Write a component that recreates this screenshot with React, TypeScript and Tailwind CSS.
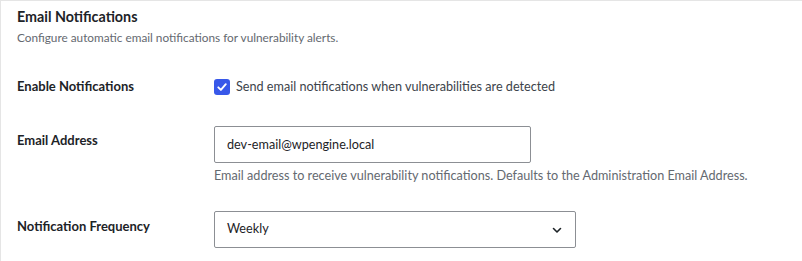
import React, { useState } from "react";

const font = { fontFamily: "Lato, 'Open Sans', sans-serif" };

function ChevronDown() {
    return (
        <svg width="12" height="12" viewBox="0 0 12 12" fill="none">
            <path d="M2.5 4.5 6 8l3.5-3.5" stroke="#1d2327" strokeWidth="1.6" strokeLinecap="round" strokeLinejoin="round" />
        </svg>
    );
}

export default function App() {
    const [enabled, setEnabled] = useState(true);
    const [email, setEmail] = useState("dev-email@wpengine.local");

    return (
        <div className="w-[802px] h-[261px] bg-white border-t border-l border-[#e5e5e5] overflow-hidden" style={font}>
            <div className="pl-[16px] pt-[5px]">
                <h2 className="text-[14.3px] font-bold text-[#1d2327] leading-[22px]">Email Notifications</h2>
                <p className="text-[11.8px] text-[#646970] leading-[18px] mt-[1px]">
                    Configure automatic email notifications for vulnerability alerts.
                </p>
            </div>

            <div className="pl-[16px] mt-[30px] flex items-center h-[20px]">
                <div className="w-[197px] text-[13px] font-bold text-[#1d2327]">Enable Notifications</div>
                <label className="flex items-center gap-[6px] text-[12.65px] text-[#3c434a] cursor-pointer">
                    <span
                        onClick={() => setEnabled(!enabled)}
                        className={`w-[16px] h-[16px] rounded-[3px] flex items-center justify-center ${enabled ? "bg-[#3858e9]" : "border border-[#8c8f94] bg-white"}`}
                    >
                        {enabled && (
                            <svg width="12" height="12" viewBox="0 0 12 12" fill="none">
                                <path d="M2.3 6.3 4.9 8.9 9.8 3.2" stroke="white" strokeWidth="1.9" strokeLinecap="round" strokeLinejoin="round" />
                            </svg>
                        )}
                    </span>
                    Send email notifications when vulnerabilities are detected
                </label>
            </div>

            <div className="pl-[16px] mt-[29px] flex items-start">
                <div className="w-[197px] text-[13px] font-bold text-[#1d2327] pt-[5px]">Email Address</div>
                <div>
                    <input
                        value={email}
                        onChange={e => setEmail(e.target.value)}
                        className="w-[317px] h-[37px] px-[12px] border border-[#8c8f94] rounded-[2px] text-[12.65px] text-[#1d2327] outline-none"
                        style={font}
                    />
                    <p className="mt-[3px] text-[12.65px] text-[#646970] leading-[20px]">
                        Email address to receive vulnerability notifications. Defaults to the Administration Email Address.
                    </p>
                </div>
            </div>

            <div className="pl-[16px] mt-[25px] flex items-start">
                <div className="w-[197px] text-[13px] font-bold text-[#1d2327] pt-[6px]">Notification Frequency</div>
                <div className="w-[362px] h-[37px] px-[12px] border border-[#8c8f94] rounded-[2px] flex items-center justify-between text-[12.65px] text-[#1d2327]">
                    <span>Weekly</span>
                    <ChevronDown />
                </div>
            </div>
        </div>
    );
}
